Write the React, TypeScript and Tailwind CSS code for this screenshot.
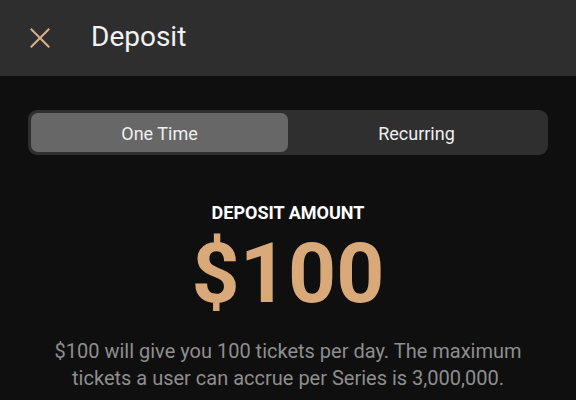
import React, { useState } from "react";

const App = () => {
  const [mode, setMode] = useState("one");

  return (
    <div
      className="w-[576px] h-[400px] bg-[#0f0f0f] overflow-hidden"
      style={{ fontFamily: "Roboto, 'Liberation Sans', sans-serif" }}
    >
      <div className="h-[76px] bg-[#2e2e2e] flex items-center px-[30px]">
        <svg width="20" height="20" viewBox="0 0 20 20" className="shrink-0">
          <path d="M1.5 1.5 L18.5 18.5 M18.5 1.5 L1.5 18.5" stroke="#d9b08c" strokeWidth="2" strokeLinecap="square" />
        </svg>
        <h1 className="ml-[41px] text-[28px] text-[#f2f2f2] leading-none -mt-[3px]">Deposit</h1>
      </div>

      <div className="px-[28px] pt-[34px]">
        <div className="flex h-[45px] bg-[#2f2f2f] rounded-[9px] p-[3px]">
          <button
            onClick={() => setMode("one")}
            className={`flex-1 rounded-[7px] text-[18px] pt-[1px] ${mode === "one" ? "bg-[#676767] text-[#f0f0f0]" : "text-[#f0f0f0]"}`}
          >
            One Time
          </button>
          <button
            onClick={() => setMode("rec")}
            className={`flex-1 rounded-[7px] text-[18px] pt-[1px] ${mode === "rec" ? "bg-[#676767] text-[#f0f0f0]" : "text-[#f0f0f0]"}`}
          >
            Recurring
          </button>
        </div>
      </div>

      <div className="flex flex-col items-center mt-[49px]">
        <h2 className="text-[18px] font-bold text-white leading-none">DEPOSIT AMOUNT</h2>
        <div className="text-[84px] font-bold text-[#daa97a] leading-none mt-[10px]">$100</div>
        <p className="text-[20px] text-[#8e8e8e] text-center leading-[27px] mt-[22px] px-[40px]">
          $100 will give you 100 tickets per day. The maximum tickets a user can accrue per Series is 3,000,000.
        </p>
      </div>
    </div>
  );
};

export default App;
